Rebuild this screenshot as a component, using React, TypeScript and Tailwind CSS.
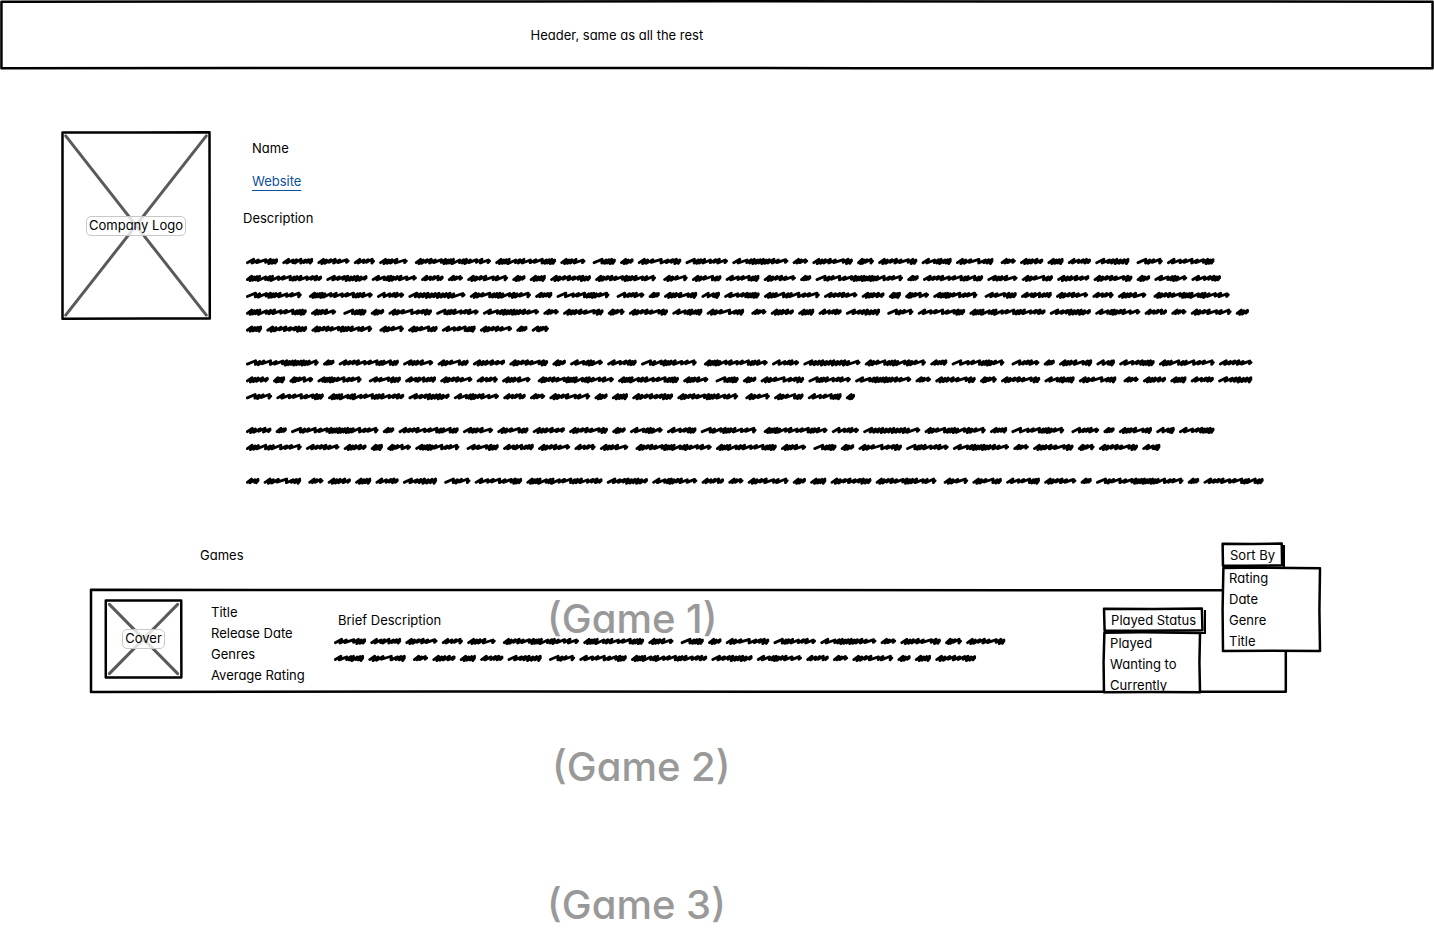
import type { ReactNode } from "react";

/* ---------- Scribbled placeholder copy ---------- */

// [width in thirds of a pixel, stroke pattern, wide gap after the word]
// i = open stroke, u = tight stroke, r = long slanted stroke
type Word = [number, string, boolean?];

const WORDS: Word[] = [
  [96, "iiruuu"], [92, "iruriii"], [96, "uuiiir"], [63, "irir"], [85, "uuuir", true],
  [228, "uuiiiruuuuruuirir"], [182, "uuuuruiriruuuu"], [75, "uuuir", true],
  [69, "ruuuu"], [40, "uui"], [130, "uuiriiuu"], [127, "ruuiriir"], [168, "iruuuuuuuiir"],
  [46, "iir"], [121, "uuuiiruu"], [50, "uuir"], [117, "uuiiiruu"], [90, "iruuiuu"], [112, "uuiriuu", true],
  [45, "iir"], [69, "uuuii"], [48, "uuuu"], [69, "iriii"], [102, "iiuuuuu", true],
  [78, "ruir"], [142, "iririruuu"], [228, "uuuuruuriruuiriii"], [123, "iiiuuuuui"], [135, "iruuuiirr"],
  [67, "iriri"], [45, "iir"], [122, "uuiirur"], [39, "uui"], [48, "uuuu"], [122, "uuiiiiuuu"],
  [182, "uuiiiruuuirur", true],
  [73, "uuir"], [88, "uuiruu"], [101, "iriruuu"], [96, "uuiiir"], [33, "iii"], [262, "ruiriruuuuuuuuuriir"],
  [34, "iii"], [180, "iiiiriruuruu"], [90, "iuuir"], [93, "uuiruu"], [96, "uuuiii"], [116, "uuiiiruu"],
  [40, "uui"], [98, "iruuur"], [88, "iriiuu"], [167, "ruruuuirir", true],
  [191, "uuuuuririruuir"], [81, "rriir"], [171, "iuuuuuuuuuur"], [183, "uuiruuuuruuir"], [51, "iiii"],
  [158, "rriruuuuir", true],
  [83, "riiir"], [33, "iii"], [99, "uuuiruu"], [55, "rruu"], [106, "iriiuuuu"], [167, "uuuruuriir"],
  [100, "iiiiir"], [68, "uuuii"], [36, "uuuu"], [71, "uuirr"], [132, "iuuuuiriir", true],
];

const ADVANCE: Record<string, number> = { i: 9, u: 6, r: 17 };

// row on the block, first word, word count, and optional widths of a cut first / last word
interface Line {
  row: number;
  from: number;
  count: number;
  head?: number;
  tail?: number;
}

const DESCRIPTION: Line[] = [
  { row: 0, from: 0, count: 26 },
  { row: 1, from: 26, count: 25 },
  { row: 2, from: 51, count: 24 },
  { row: 3, from: 75, count: 27 },
  { row: 4, from: 102, count: 9, tail: 51 },
  { row: 6, from: 41, count: 24, head: 218 },
  { row: 7, from: 65, count: 28 },
  { row: 8, from: 24, count: 16, tail: 27 },
  { row: 10, from: 39, count: 24, head: 76 },
  { row: 11, from: 63, count: 24, tail: 54 },
  { row: 13, from: 17, count: 27, head: 40 },
];

const BRIEF: Line[] = [
  { row: 0, from: 0, count: 17 },
  { row: 1, from: 17, count: 18 },
];

function wordPath(x: number, y: number, width: number, pattern: string) {
  const strokes = pattern.split("");
  const total = strokes.reduce((sum, s) => sum + ADVANCE[s], 0);
  const scale = (width - 13) / total;
  let cx = x + 4;
  let d = `M${cx.toFixed(1)} ${y + 4}`;
  strokes.forEach((s, n) => {
    const step = ADVANCE[s] * scale;
    const lean = s === "r" ? 1 : 5;
    const top = y - 6 + ((n * 5) % 3);
    const bottom = y + 5 - ((n * 7) % 3) + (s === "u" ? 2 : 0);
    d += `L${(cx + step + lean).toFixed(1)} ${top}L${(cx + step).toFixed(1)} ${bottom}`;
    cx += step;
  });
  return d + `L${(x + width - 4).toFixed(1)} ${y - 1}`;
}

function Scribble({ lines, label, height }: { lines: Line[]; label: string; height: number }) {
  const paths: string[] = [];
  let right = 0;
  lines.forEach((line) => {
    let x = 0;
    const y = 16 + line.row * 50.7;
    for (let n = 0; n < line.count; n++) {
      const [full, pattern, wide] = WORDS[(line.from + n) % WORDS.length];
      let width = full;
      if (n === 0 && line.head) width = line.head;
      if (n === line.count - 1 && line.tail) width = line.tail;
      const kept = Math.max(2, Math.round((pattern.length * width) / full));
      paths.push(wordPath(x, y, width, pattern.slice(0, kept)));
      right = Math.max(right, x + width);
      x += width + (wide ? 22 : 13.2);
    }
  });
  const w = Math.ceil(right / 3);
  return (
    <svg role="img" aria-label={label} width={w} height={height} viewBox={`0 0 ${w * 3} ${height * 3}`} className="block shrink-0">
      <path d={paths.join("")} fill="none" stroke="#000" strokeWidth="8.5" strokeLinecap="round" strokeLinejoin="round" />
    </svg>
  );
}

/* ---------- Hand-drawn frames ---------- */

function Outline({ d }: { d: string }) {
  return (
    <svg aria-hidden="true" viewBox="0 0 100 100" preserveAspectRatio="none" className="pointer-events-none absolute inset-0 h-full w-full overflow-visible">
      <path d={d} fill="none" stroke="#000" strokeWidth="2.5" strokeLinejoin="round" strokeLinecap="round" vectorEffect="non-scaling-stroke" />
    </svg>
  );
}

function Placeholder({ label, className }: { label: string; className: string }) {
  return (
    <div className={`relative flex shrink-0 items-center justify-center ${className}`}>
      <Outline d="M1 .8L50 .8L99 .6L99.2 99.2L60 99.2L1 99.4Z" />
      <svg aria-hidden="true" viewBox="0 0 100 100" preserveAspectRatio="none" className="absolute inset-1 h-[calc(100%-8px)] w-[calc(100%-8px)] overflow-visible">
        <path d="M.5 .5L99.5 99.5M99.5 .5L.5 99.5" stroke="#5a5a5a" strokeWidth="3" strokeLinecap="round" vectorEffect="non-scaling-stroke" />
      </svg>
      <span className="relative rounded-[5px] border border-[#c8c8c8] bg-white/80 px-0.5 pb-0.5 leading-4">{label}</span>
    </div>
  );
}

function MenuButton({ children }: { children: ReactNode }) {
  return (
    <button type="button" className="relative block h-6 cursor-pointer bg-white px-2 leading-5 whitespace-nowrap shadow-[2px_2px_0_#000]">
      <Outline d="M1 3L50 4L98 2L98.6 93L40 95L1.6 95Z" />
      {children}
    </button>
  );
}

function Menu({ items, className }: { items: string[]; className: string }) {
  return (
    <div className={`relative bg-white ${className}`}>
      <Outline d="M1.4 1.2L40 .6L99 1.6L98.4 50L99 98.8L50 98.4L1 98.8L.6 50Z" />
      <ul>
        {items.map((item) => (
          <li key={item}>
            <button type="button" className="relative block h-[21px] w-full cursor-pointer px-[7px] text-left">
              {item}
            </button>
          </li>
        ))}
      </ul>
    </div>
  );
}

export default function App() {
  return (
    <div className="min-h-screen overflow-x-hidden bg-white font-[Inter,'Liberation_Sans',sans-serif] text-[13px] leading-5 text-black [font-feature-settings:'cv11']">
      <header className="relative flex h-[70px] items-center pl-[37%]">
        <Outline d="M.1 2.4L50 1.8L99.9 2.4L99.9 97.6L60 97.4L30 97L.1 97.4Z" />
        <p>Header, same as all the rest</p>
      </header>

      <main>
        <section className="flex items-start gap-8 pt-[61px] pl-[61px]">
          <Placeholder label="Company Logo" className="h-[189px] w-[150px]" />
          <div className="pt-[7px]">
            <h1 className="pl-[9px]">Name</h1>
            <p className="mt-[13px] pl-[9px]">
              <a href="#website" className="text-[#0b4f9e] underline underline-offset-4">Website</a>
            </p>
            <h2 className="mt-[17px]">Description</h2>
            <div className="mt-7 pl-[3px]">
              <Scribble lines={DESCRIPTION} label="Company description" height={232} />
            </div>
          </div>
        </section>

        <section className="mr-[147px] ml-[91px]">
          <div className="mt-[55px] flex h-[46px] items-start justify-between">
            <h2 className="pt-0.5 pl-[109px]">Games</h2>
            <div className="relative z-20 mr-1">
              <MenuButton>Sort By</MenuButton>
              <div className="absolute top-6 left-0">
                <Menu items={["Rating", "Date", "Genre", "Title"]} className="h-[85px] w-[99px]" />
              </div>
            </div>
          </div>

          <article className="relative flex h-[104px] items-start">
            <Outline d="M0 .8L50 1L99.9 1.2L99.9 98.8L60 98.8L30 98.6L0 99Z" />
            <h3 className="absolute top-1.5 left-[456px] text-[40px] leading-[48px] font-medium whitespace-nowrap text-[#999]">(Game 1)</h3>
            <div className="pt-[11px] pl-3.5">
              <Placeholder label="Cover" className="h-[78px] w-[77px]" />
            </div>
            <ul className="w-[127px] shrink-0 pt-[13px] pl-[29px] leading-[21px] whitespace-nowrap">
              <li>Title</li>
              <li>Release Date</li>
              <li>Genres</li>
              <li>Average Rating</li>
            </ul>
            <div className="relative pt-[21px]">
              <p className="pl-[29px]">Brief Description</p>
              <div className="mt-[6px] pl-[25px]">
                <Scribble lines={BRIEF} label="Brief description" height={28} />
              </div>
            </div>
            <div className="mt-[19px] mr-[83px] ml-auto">
              <MenuButton>Played Status</MenuButton>
              <div className="relative">
                <Menu items={["Played", "Wanting to", "Currently"]} className="h-[61px] w-[98px]" />
              </div>
            </div>
          </article>

          <article className="mt-[50px] pl-[461px]">
            <h3 className="text-[40px] leading-[48px] font-medium text-[#999]">(Game 2)</h3>
          </article>
          <article className="mt-[90px] pl-[456px]">
            <h3 className="text-[40px] leading-[48px] font-medium text-[#999]">(Game 3)</h3>
          </article>
        </section>
      </main>
    </div>
  );
}
